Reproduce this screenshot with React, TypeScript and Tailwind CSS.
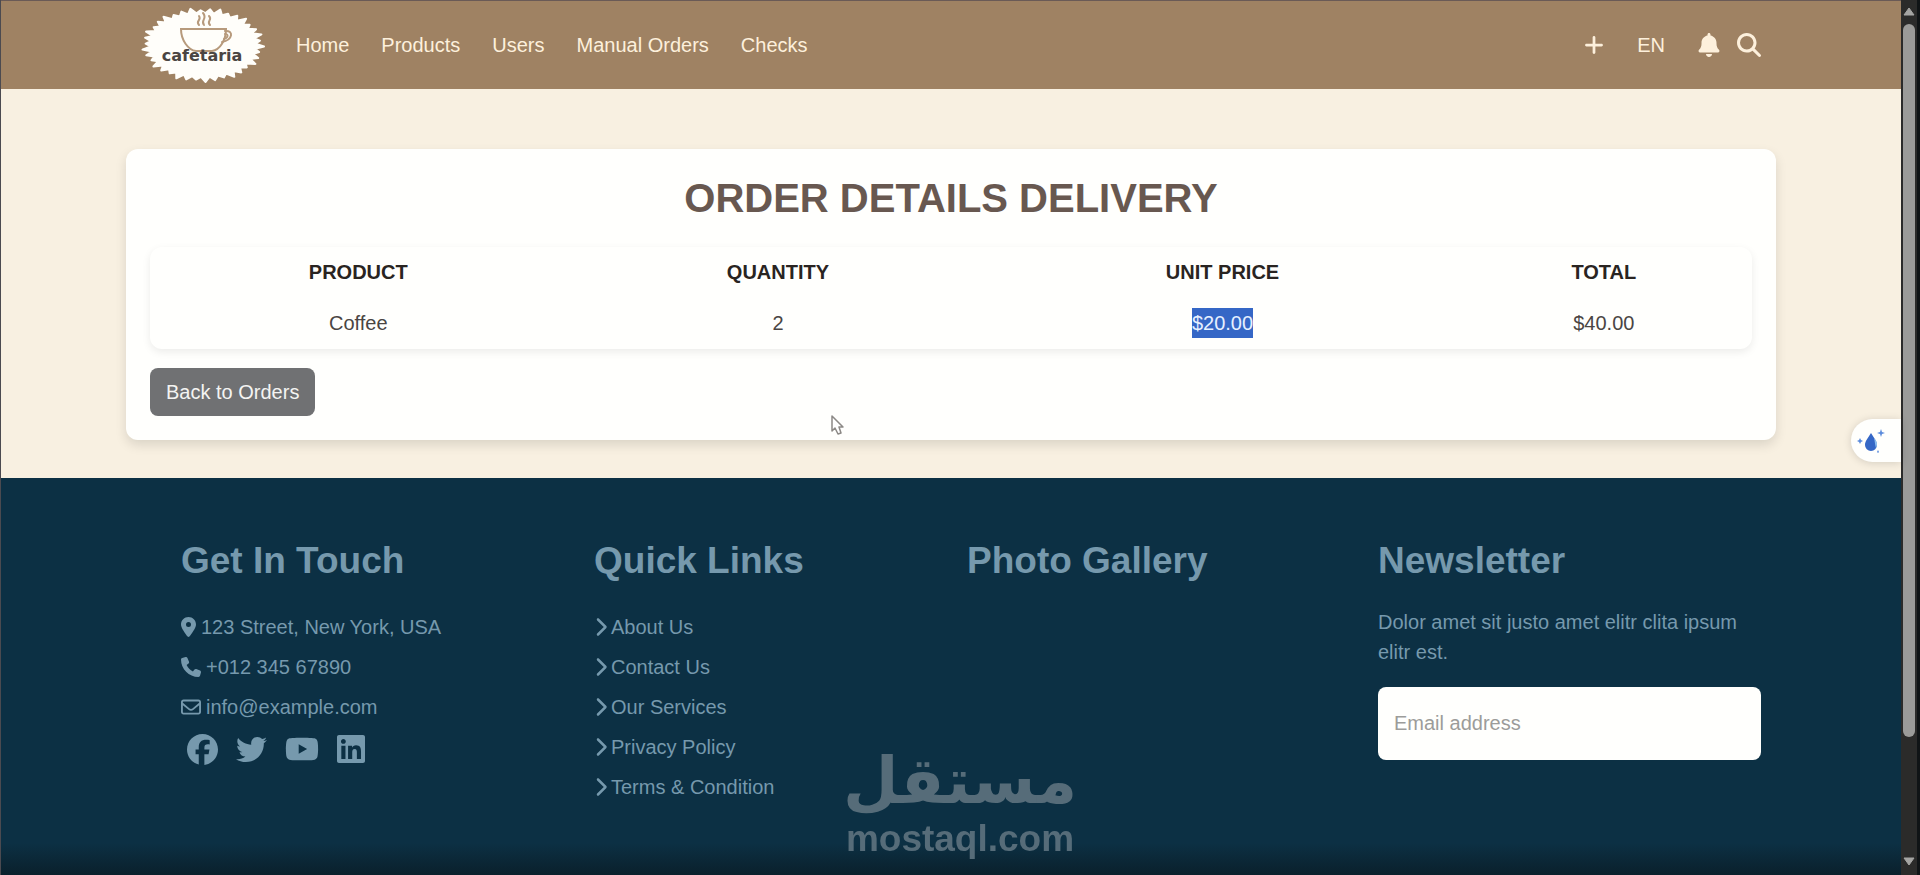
import type { FormEvent } from "react"
import {
    FaPlus,
    FaBell,
    FaMagnifyingGlass,
    FaLocationDot,
    FaPhone,
    FaRegEnvelope,
    FaChevronRight,
    FaFacebook,
    FaTwitter,
    FaYoutube,
    FaLinkedin,
} from "react-icons/fa6"

type OrderItem = {
    product: string,
    quantity: number,
    price: number
}

const navLinks = ["Home", "Products", "Users", "Manual Orders", "Checks"]
const quickLinks = ["About Us", "Contact Us", "Our Services", "Privacy Policy", "Terms & Condition"]
const items: OrderItem[] = [{ product: "Coffee", quantity: 2, price: 20 }]

// jagged edge of the badge behind the cup
const teeth = 38
const badge = Array.from({ length: teeth * 2 }, (_, i) => {
    const angle = (i * Math.PI) / teeth
    const out = i % 2 === 0 ? 1 - (i % 3) * 0.03 : 0.86
    return `${(63 + 61 * out * Math.cos(angle + 0.04)).toFixed(1)},${(38 + 37 * out * Math.sin(angle + 0.04)).toFixed(1)}`
}).join(" ")

function Logo() {
    return (
        <svg width="126" height="76" viewBox="0 0 126 76" role="img" aria-label="cafetaria">
            <polygon points={badge} fill="#fffefa" stroke="#fffefa" strokeWidth="2" strokeLinejoin="round" />
            <g fill="none" stroke="#b79a7c" strokeWidth="2" strokeLinecap="round">
                <path d="M41 22H86C86 33 80 43 72 44H56C48 43 41 33 41 22Z" />
                <path d="M85 24C94 23 93 33 82 35" />
                <path d="M85 27C89 27 88 31 84 32" />
                <path d="M59 18C55 14 62 13 59 9M64 18C60 13 68 12 63 6M70 18C66 14 73 13 69 9" />
            </g>
            <text x="62" y="54" textAnchor="middle" fontFamily="DejaVu Sans, sans-serif" fontWeight="bold" fontSize="16" fill="#4a4542">cafetaria</text>
        </svg>
    )
}

function Navbar() {
    return (
        <header className="border-t border-[#6a5a56] bg-[#9f8263] text-[#fdf0dc]">
            <div className="mx-auto flex h-22 max-w-[1650px] items-center justify-between pl-[14px] pr-[15px]">
                <div className="flex items-center gap-[30px]">
                    <a href="#"><Logo /></a>
                    <nav className="flex gap-8">
                        {navLinks.map((link) => (
                            <a key={link} href="#">{link}</a>
                        ))}
                    </nav>
                </div>
                <div className="flex items-center">
                    <a href="#" aria-label="Add" className="mr-8"><FaPlus size={22} /></a>
                    <button type="button" className="mr-8">EN</button>
                    <button type="button" aria-label="Notifications" className="mr-4"><FaBell size={24} /></button>
                    <button type="button" aria-label="Search"><FaMagnifyingGlass size={24} /></button>
                </div>
            </div>
        </header>
    )
}

function OrderDetails() {
    return (
        <main className="bg-[#f8f0e1] pt-15 pb-[38px]">
            <div className="mx-auto max-w-[1650px] rounded-xl bg-[#fffffd] p-6 shadow-[0_5px_12px_rgba(0,0,0,0.12)]">
                <h1 className="mb-6 text-center text-[40px] leading-[50px] font-bold text-[#685850]">ORDER DETAILS DELIVERY</h1>
                <table className="mb-[19px] w-full table-fixed rounded-xl text-center shadow-[0_3px_8px_rgba(0,0,0,0.08)]">
                    <colgroup>
                        <col className="w-[26%]" />
                        <col className="w-[26.4%]" />
                        <col className="w-[29.1%]" />
                        <col className="w-[18.5%]" />
                    </colgroup>
                    <thead className="text-[#292421]">
                        <tr>
                            <th className="py-[10px]">PRODUCT</th>
                            <th className="py-[10px]">QUANTITY</th>
                            <th className="py-[10px]">UNIT PRICE</th>
                            <th className="py-[10px]">TOTAL</th>
                        </tr>
                    </thead>
                    <tbody className="text-[#4a4543]">
                        {items.map((item) => (
                            <tr key={item.product}>
                                <td className="py-[11px]">{item.product}</td>
                                <td className="py-[11px]">{item.quantity}</td>
                                <td className="py-[11px]">
                                    <span className="inline-block bg-[#3567c6] text-[#e6f0ff]">${item.price.toFixed(2)}</span>
                                </td>
                                <td className="py-[11px]">${(item.price * item.quantity).toFixed(2)}</td>
                            </tr>
                        ))}
                    </tbody>
                </table>
                <button type="button" className="h-12 rounded-lg bg-[#707173] px-4 text-[#f4f4f2]">Back to Orders</button>
            </div>
        </main>
    )
}

function Footer() {
    function handleSubmit(event: FormEvent) {
        event.preventDefault()
    }
    return (
        <footer className="relative grow bg-[#0c3044] bg-linear-to-t from-[#0a202c] to-[#0c3044] to-[32px] pt-[61px] pb-10 text-[#7699ad]">
            <div className="mx-auto grid max-w-[1650px] grid-cols-[413fr_373fr_411fr_383fr] pl-[55px] pr-[15px]">
                <div>
                    <h4 className="text-[37px] leading-11 font-bold">Get In Touch</h4>
                    <div className="mt-[29px] flex flex-col gap-[10px]">
                        <p className="flex items-center gap-[5px]"><FaLocationDot className="h-5 w-[15px]" />123 Street, New York, USA</p>
                        <p className="flex items-center gap-[5px]"><FaPhone className="h-5 w-5" />+012 345 67890</p>
                        <p className="flex items-center gap-[5px]"><FaRegEnvelope className="h-5 w-5" />info@example.com</p>
                    </div>
                    <div className="mt-[10px] flex items-center gap-[18px] pl-[6px]">
                        <a href="#" aria-label="Facebook"><FaFacebook size={31} /></a>
                        <a href="#" aria-label="Twitter"><FaTwitter size={31} /></a>
                        <a href="#" aria-label="YouTube"><FaYoutube size={34} /></a>
                        <a href="#" aria-label="LinkedIn"><FaLinkedin className="h-8 w-7" /></a>
                    </div>
                </div>
                <div>
                    <h4 className="text-[37px] leading-11 font-bold">Quick Links</h4>
                    <ul className="mt-[29px] flex flex-col gap-[10px]">
                        {quickLinks.map((link) => (
                            <li key={link}>
                                <a href="#" className="flex items-center gap-1"><FaChevronRight className="h-5 w-[13px]" />{link}</a>
                            </li>
                        ))}
                    </ul>
                </div>
                <div>
                    <h4 className="text-[37px] leading-11 font-bold">Photo Gallery</h4>
                </div>
                <form onSubmit={handleSubmit}>
                    <h4 className="text-[37px] leading-11 font-bold">Newsletter</h4>
                    <p className="mt-6">Dolor amet sit justo amet elitr clita ipsum elitr est.</p>
                    <input
                        className="mt-5 h-[73px] w-full rounded-lg bg-[#fffffd] px-4 text-[#444] placeholder:text-[#9c9c9a]"
                        type="email"
                        aria-label="Email address"
                        placeholder="Email address"
                    />
                </form>
            </div>
        </footer>
    )
}

function Watermark() {
    return (
        <div className="pointer-events-none fixed bottom-4 left-1/2 flex -translate-x-1/2 flex-col items-center font-bold text-[#566c79]">
            <span lang="ar" dir="rtl" className="font-['DejaVu_Sans',sans-serif] text-[64px] leading-[76px]">مستقل</span>
            <span className="text-[37px] leading-10">mostaql.com</span>
        </div>
    )
}

function Scrollbar() {
    return (
        <div aria-hidden="true" className="flex w-[19px] shrink-0 flex-col items-center border-r-3 border-[#101416] bg-[#2b2b2a] pt-[7px] pb-[9px]">
            <svg width="12" height="9" viewBox="0 0 12 9"><path d="M6 1L11 8H1Z" fill="#a5a5a3" stroke="#a5a5a3" strokeLinejoin="round" /></svg>
            <div className="mt-2 mb-30 w-3 grow rounded-full bg-[#9b9b99]" />
            <svg width="12" height="9" viewBox="0 0 12 9"><path d="M6 8L1 1H11Z" fill="#a5a5a3" stroke="#a5a5a3" strokeLinejoin="round" /></svg>
        </div>
    )
}

export default function App() {
    return (
        <div className="flex min-h-screen border-l border-[#4b4a50] font-['Liberation_Sans',Arial,sans-serif] text-[20px] leading-[30px]">
            <div className="relative flex grow flex-col">
                <Navbar />
                <OrderDetails />
                <Footer />
                <button
                    type="button"
                    aria-label="Assistant"
                    className="absolute top-[419px] right-0 flex h-[43px] w-[50px] items-center rounded-l-full bg-[#fffffd] pl-[6px] shadow-[0_1px_8px_rgba(0,0,0,0.15)]"
                >
                    <svg width="30" height="30" viewBox="0 0 30 30" fill="#3567c6">
                        <path d="M14 7C17 12 20 15 20 19A6 6 0 0 1 8 19C8 15 11 12 14 7Z" />
                        <path d="M24 3L25 6L28 7L25 8L24 11L23 8L20 7L23 6ZM3 12L4 14L6 15L4 16L3 18L2 16L0 15L2 14ZM21 24L22 26L21 27L20 26Z" fill="#5b8bdc" />
                        <path d="M17 12C20 15 21 18 19 22C18 19 18 16 17 12Z" fill="#8fc0ee" />
                    </svg>
                </button>
            </div>
            <Scrollbar />
            <Watermark />
            {/* pointer */}
            <svg className="pointer-events-none absolute top-[415px] left-[831px]" width="14" height="21" viewBox="0 0 14 21">
                <path d="M1 1V16L4 13L7 19L10 18L8 12H12Z" fill="#fff" stroke="#8c8986" strokeWidth="1.5" strokeLinejoin="round" />
            </svg>
        </div>
    )
}
